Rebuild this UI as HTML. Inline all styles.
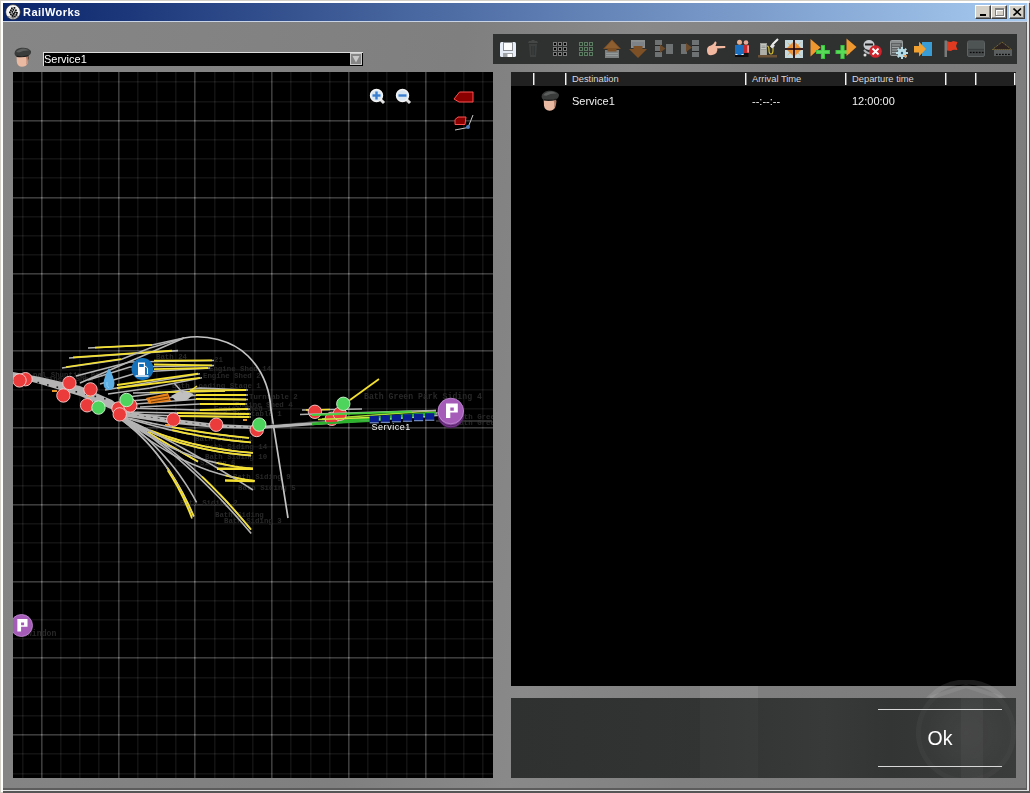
<!DOCTYPE html>
<html><head><meta charset="utf-8"><title>RailWorks</title>
<style>
*{box-sizing:border-box}
html,body{margin:0;padding:0}
body{width:1030px;height:793px;overflow:hidden;position:relative;background:#d4d0c8;font-family:"Liberation Sans",sans-serif}
.abs{position:absolute}
</style></head><body>

<div class="abs" style="left:1px;top:1px;width:1028px;height:791px;background:#fff"></div>
<div class="abs" style="left:3px;top:3px;width:1027px;height:790px;background:#555555"></div>
<div class="abs" style="left:3px;top:3px;width:1026px;height:788px;background:#e2e2e2"></div>
<div class="abs" style="left:3px;top:3px;width:1024px;height:787px;background:#5c5c5c"></div>

<div class="abs" style="left:3px;top:21px;width:1023px;height:767px;background:linear-gradient(100deg,#858685 0%,#7e7f7e 40%,#888988 55%,#7f807f 70%,#7a7b7a 100%)"></div>
<div class="abs" style="left:3px;top:21px;width:1024px;height:1px;background:#c8d4e6"></div>

<div class="abs" style="left:3px;top:3px;width:1024px;height:18px;background:linear-gradient(90deg,#0a246a,#a6caf0)"></div>
<div class="abs" style="left:23px;top:4px;height:16px;line-height:16px;font-size:11px;font-weight:bold;color:#fff;letter-spacing:0.45px">RailWorks</div>

<svg class="abs" style="left:5px;top:4px" width="16" height="16" viewBox="0 0 16 16">
<circle cx="8" cy="8" r="7.4" fill="#f4f4f4" stroke="#222" stroke-width="0.7"/>
<rect x="6" y="3.5" width="1.8" height="1.8" fill="#111"/><rect x="8.5" y="3" width="1.8" height="1.8" fill="#111"/><rect x="5" y="5.5" width="1.8" height="1.8" fill="#111"/><rect x="7.5" y="5" width="1.8" height="1.8" fill="#111"/><rect x="10" y="5.5" width="1.8" height="1.8" fill="#111"/><rect x="4" y="7.5" width="1.8" height="1.8" fill="#111"/><rect x="6.5" y="7" width="1.8" height="1.8" fill="#111"/><rect x="9" y="7.5" width="1.8" height="1.8" fill="#111"/><rect x="11" y="8" width="1.8" height="1.8" fill="#111"/><rect x="5" y="9.5" width="1.8" height="1.8" fill="#111"/><rect x="8" y="9" width="1.8" height="1.8" fill="#111"/><rect x="10.5" y="10" width="1.8" height="1.8" fill="#111"/><rect x="6.5" y="11" width="1.8" height="1.8" fill="#111"/><rect x="9" y="11.5" width="1.8" height="1.8" fill="#111"/>
<path d="M8,9 L8,14.5" stroke="#111" stroke-width="1.2"/>
<path d="M3,12.5 Q8,15 13,12.5" stroke="#777" stroke-width="0.8" fill="none"/>
</svg>

<div class="abs" style="left:975px;top:5px;width:16px;height:14px;background:#d4d0c8;border-top:1px solid #fff;border-left:1px solid #fff;border-right:1px solid #404040;border-bottom:1px solid #404040;box-shadow:inset -1px -1px 0 #808080"><div class="abs" style="left:4px;top:8px;width:6px;height:2px;background:#000"></div></div>
<div class="abs" style="left:991px;top:5px;width:16px;height:14px;background:#d4d0c8;border-top:1px solid #fff;border-left:1px solid #fff;border-right:1px solid #404040;border-bottom:1px solid #404040;box-shadow:inset -1px -1px 0 #808080"><div class="abs" style="left:4px;top:3px;width:9px;height:8px;border:1px solid #fff;border-top-width:2px"></div><div class="abs" style="left:3px;top:2px;width:9px;height:8px;border:1px solid #808080;border-top-width:2px"></div></div>
<div class="abs" style="left:1009px;top:5px;width:16px;height:14px;background:#d4d0c8;border-top:1px solid #fff;border-left:1px solid #fff;border-right:1px solid #404040;border-bottom:1px solid #404040;box-shadow:inset -1px -1px 0 #808080"><svg class="abs" style="left:3px;top:2px" width="9" height="8" viewBox="0 0 9 8"><path d="M0.5 0.5 L8 7.5 M8 0.5 L0.5 7.5" stroke="#000" stroke-width="1.6"/></svg></div>
<svg class="abs" style="left:14px;top:47px" width="18" height="20" viewBox="0 0 18 20">
<path d="M2.5,8 L14,8 Q14.8,13 13.5,16.5 Q12,19.8 8,19.8 Q3.5,19.5 2.8,15 Z" fill="#eab9a2"/>
<path d="M11.5,9 Q13.5,13 12,18 Q13.8,16 14,12 L14,8.5 Z" fill="#b07a66"/>
<path d="M14,8 L15,11 L14.2,14 Z" fill="#5a4030"/>
<path d="M0.5,6.5 Q0.5,2 7,0.8 Q14,0 17,4 Q17.5,7 14.5,8.8 Q9,10.5 2.5,9.5 Q0.5,8.5 0.5,6.5 Z" fill="#3a3b3b"/>
<path d="M2,5 Q5,1.5 10,1.5 Q13,1.8 15,3.5 Q10,3 5,5.5 Z" fill="#5c5e5e"/>
<path d="M2.5,8.5 Q9,10 14.5,8 L14.5,9.2 Q9,11 2.5,10 Z" fill="#1e1e1e"/>
</svg>
<div class="abs" style="left:43px;top:52px;width:320px;height:14px;background:#000;border-top:1px solid #ddd;border-left:1px solid #ddd"></div>
<div class="abs" style="left:44px;top:52px;height:14px;line-height:14px;font-size:11px;color:#fff">Service1</div>
<div class="abs" style="left:350px;top:53px;width:12px;height:12px;background:#858585;border:1px solid #c8c8c8"></div>
<svg class="abs" style="left:352px;top:55px" width="8" height="8" viewBox="0 0 8 8"><path d="M0.5 1 L7.5 1 L4 7.5 Z" fill="#c8c8c8"/></svg>

<svg class="abs" style="left:13px;top:72px" width="480" height="706" viewBox="0 0 480 706"><rect width="480" height="706" fill="#000"/>
<g>
<rect x="9" y="0" width="1" height="706" fill="#121212"/><rect x="10" y="0" width="1" height="706" fill="#0a0a0a"/>
<rect x="28" y="0" width="1" height="706" fill="#3c3c3c"/><rect x="29" y="0" width="1" height="706" fill="#242424"/>
<rect x="47" y="0" width="1" height="706" fill="#121212"/><rect x="48" y="0" width="1" height="706" fill="#0a0a0a"/>
<rect x="66" y="0" width="1" height="706" fill="#121212"/><rect x="67" y="0" width="1" height="706" fill="#0a0a0a"/>
<rect x="85" y="0" width="1" height="706" fill="#121212"/><rect x="86" y="0" width="1" height="706" fill="#0a0a0a"/>
<rect x="105" y="0" width="1" height="706" fill="#3c3c3c"/><rect x="106" y="0" width="1" height="706" fill="#242424"/>
<rect x="124" y="0" width="1" height="706" fill="#121212"/><rect x="125" y="0" width="1" height="706" fill="#0a0a0a"/>
<rect x="143" y="0" width="1" height="706" fill="#121212"/><rect x="144" y="0" width="1" height="706" fill="#0a0a0a"/>
<rect x="162" y="0" width="1" height="706" fill="#121212"/><rect x="163" y="0" width="1" height="706" fill="#0a0a0a"/>
<rect x="181" y="0" width="1" height="706" fill="#3c3c3c"/><rect x="182" y="0" width="1" height="706" fill="#242424"/>
<rect x="201" y="0" width="1" height="706" fill="#121212"/><rect x="202" y="0" width="1" height="706" fill="#0a0a0a"/>
<rect x="220" y="0" width="1" height="706" fill="#121212"/><rect x="221" y="0" width="1" height="706" fill="#0a0a0a"/>
<rect x="239" y="0" width="1" height="706" fill="#121212"/><rect x="240" y="0" width="1" height="706" fill="#0a0a0a"/>
<rect x="258" y="0" width="1" height="706" fill="#3c3c3c"/><rect x="259" y="0" width="1" height="706" fill="#242424"/>
<rect x="277" y="0" width="1" height="706" fill="#121212"/><rect x="278" y="0" width="1" height="706" fill="#0a0a0a"/>
<rect x="297" y="0" width="1" height="706" fill="#121212"/><rect x="298" y="0" width="1" height="706" fill="#0a0a0a"/>
<rect x="316" y="0" width="1" height="706" fill="#121212"/><rect x="317" y="0" width="1" height="706" fill="#0a0a0a"/>
<rect x="335" y="0" width="1" height="706" fill="#3c3c3c"/><rect x="336" y="0" width="1" height="706" fill="#242424"/>
<rect x="354" y="0" width="1" height="706" fill="#121212"/><rect x="355" y="0" width="1" height="706" fill="#0a0a0a"/>
<rect x="373" y="0" width="1" height="706" fill="#121212"/><rect x="374" y="0" width="1" height="706" fill="#0a0a0a"/>
<rect x="393" y="0" width="1" height="706" fill="#121212"/><rect x="394" y="0" width="1" height="706" fill="#0a0a0a"/>
<rect x="412" y="0" width="1" height="706" fill="#3c3c3c"/><rect x="413" y="0" width="1" height="706" fill="#242424"/>
<rect x="431" y="0" width="1" height="706" fill="#121212"/><rect x="432" y="0" width="1" height="706" fill="#0a0a0a"/>
<rect x="450" y="0" width="1" height="706" fill="#121212"/><rect x="451" y="0" width="1" height="706" fill="#0a0a0a"/>
<rect x="469" y="0" width="1" height="706" fill="#121212"/><rect x="470" y="0" width="1" height="706" fill="#0a0a0a"/>
</g><g style="mix-blend-mode:plus-lighter">
<rect x="0" y="9" width="480" height="1" fill="#121212"/><rect x="0" y="10" width="480" height="1" fill="#0a0a0a"/>
<rect x="0" y="29" width="480" height="1" fill="#121212"/><rect x="0" y="30" width="480" height="1" fill="#0a0a0a"/>
<rect x="0" y="48" width="480" height="1" fill="#3c3c3c"/><rect x="0" y="49" width="480" height="1" fill="#242424"/>
<rect x="0" y="67" width="480" height="1" fill="#121212"/><rect x="0" y="68" width="480" height="1" fill="#0a0a0a"/>
<rect x="0" y="86" width="480" height="1" fill="#121212"/><rect x="0" y="87" width="480" height="1" fill="#0a0a0a"/>
<rect x="0" y="105" width="480" height="1" fill="#121212"/><rect x="0" y="106" width="480" height="1" fill="#0a0a0a"/>
<rect x="0" y="125" width="480" height="1" fill="#3c3c3c"/><rect x="0" y="126" width="480" height="1" fill="#242424"/>
<rect x="0" y="144" width="480" height="1" fill="#121212"/><rect x="0" y="145" width="480" height="1" fill="#0a0a0a"/>
<rect x="0" y="163" width="480" height="1" fill="#121212"/><rect x="0" y="164" width="480" height="1" fill="#0a0a0a"/>
<rect x="0" y="182" width="480" height="1" fill="#121212"/><rect x="0" y="183" width="480" height="1" fill="#0a0a0a"/>
<rect x="0" y="201" width="480" height="1" fill="#3c3c3c"/><rect x="0" y="202" width="480" height="1" fill="#242424"/>
<rect x="0" y="221" width="480" height="1" fill="#121212"/><rect x="0" y="222" width="480" height="1" fill="#0a0a0a"/>
<rect x="0" y="240" width="480" height="1" fill="#121212"/><rect x="0" y="241" width="480" height="1" fill="#0a0a0a"/>
<rect x="0" y="259" width="480" height="1" fill="#121212"/><rect x="0" y="260" width="480" height="1" fill="#0a0a0a"/>
<rect x="0" y="278" width="480" height="1" fill="#3c3c3c"/><rect x="0" y="279" width="480" height="1" fill="#242424"/>
<rect x="0" y="297" width="480" height="1" fill="#121212"/><rect x="0" y="298" width="480" height="1" fill="#0a0a0a"/>
<rect x="0" y="317" width="480" height="1" fill="#121212"/><rect x="0" y="318" width="480" height="1" fill="#0a0a0a"/>
<rect x="0" y="336" width="480" height="1" fill="#121212"/><rect x="0" y="337" width="480" height="1" fill="#0a0a0a"/>
<rect x="0" y="355" width="480" height="1" fill="#3c3c3c"/><rect x="0" y="356" width="480" height="1" fill="#242424"/>
<rect x="0" y="374" width="480" height="1" fill="#121212"/><rect x="0" y="375" width="480" height="1" fill="#0a0a0a"/>
<rect x="0" y="393" width="480" height="1" fill="#121212"/><rect x="0" y="394" width="480" height="1" fill="#0a0a0a"/>
<rect x="0" y="413" width="480" height="1" fill="#121212"/><rect x="0" y="414" width="480" height="1" fill="#0a0a0a"/>
<rect x="0" y="432" width="480" height="1" fill="#3c3c3c"/><rect x="0" y="433" width="480" height="1" fill="#242424"/>
<rect x="0" y="451" width="480" height="1" fill="#121212"/><rect x="0" y="452" width="480" height="1" fill="#0a0a0a"/>
<rect x="0" y="470" width="480" height="1" fill="#121212"/><rect x="0" y="471" width="480" height="1" fill="#0a0a0a"/>
<rect x="0" y="489" width="480" height="1" fill="#121212"/><rect x="0" y="490" width="480" height="1" fill="#0a0a0a"/>
<rect x="0" y="509" width="480" height="1" fill="#3c3c3c"/><rect x="0" y="510" width="480" height="1" fill="#242424"/>
<rect x="0" y="528" width="480" height="1" fill="#121212"/><rect x="0" y="529" width="480" height="1" fill="#0a0a0a"/>
<rect x="0" y="547" width="480" height="1" fill="#121212"/><rect x="0" y="548" width="480" height="1" fill="#0a0a0a"/>
<rect x="0" y="566" width="480" height="1" fill="#121212"/><rect x="0" y="567" width="480" height="1" fill="#0a0a0a"/>
<rect x="0" y="585" width="480" height="1" fill="#3c3c3c"/><rect x="0" y="586" width="480" height="1" fill="#242424"/>
<rect x="0" y="605" width="480" height="1" fill="#121212"/><rect x="0" y="606" width="480" height="1" fill="#0a0a0a"/>
<rect x="0" y="624" width="480" height="1" fill="#121212"/><rect x="0" y="625" width="480" height="1" fill="#0a0a0a"/>
<rect x="0" y="643" width="480" height="1" fill="#121212"/><rect x="0" y="644" width="480" height="1" fill="#0a0a0a"/>
<rect x="0" y="662" width="480" height="1" fill="#3c3c3c"/><rect x="0" y="663" width="480" height="1" fill="#242424"/>
<rect x="0" y="681" width="480" height="1" fill="#121212"/><rect x="0" y="682" width="480" height="1" fill="#0a0a0a"/>
<rect x="0" y="701" width="480" height="1" fill="#121212"/><rect x="0" y="702" width="480" height="1" fill="#0a0a0a"/>
</g>
<g id="mapcontent" transform="translate(-13,-72)"><text x="33" y="377" fill="#282828" font-family="Liberation Mono" font-size="7.4" font-weight="bold">nal Shunting Bath</text>
<text x="40" y="381" fill="#282828" font-family="Liberation Mono" font-size="7.4" font-weight="bold">ngineer Shed</text>
<text x="156" y="359" fill="#282828" font-family="Liberation Mono" font-size="7.4" font-weight="bold">Bath 24</text>
<text x="214" y="362" fill="#282828" font-family="Liberation Mono" font-size="7.4" font-weight="bold">21</text>
<text x="209" y="371" fill="#282828" font-family="Liberation Mono" font-size="7.4" font-weight="bold">Engine Shed 14</text>
<text x="203" y="378" fill="#282828" font-family="Liberation Mono" font-size="7.4" font-weight="bold">Engine Shed 2</text>
<text x="172" y="388" fill="#282828" font-family="Liberation Mono" font-size="7.4" font-weight="bold">Bath Loading Stage 1</text>
<text x="249" y="399" fill="#282828" font-family="Liberation Mono" font-size="7.4" font-weight="bold">Turntable 2</text>
<text x="235" y="407" fill="#282828" font-family="Liberation Mono" font-size="7.4" font-weight="bold">Engine Shed 4</text>
<text x="214" y="410.5" fill="#282828" font-family="Liberation Mono" font-size="7.4" font-weight="bold">Engine Shed 1</text>
<text x="233" y="416" fill="#282828" font-family="Liberation Mono" font-size="7.4" font-weight="bold">Turntable 1</text>
<text x="195" y="441" fill="#282828" font-family="Liberation Mono" font-size="7.4" font-weight="bold">Bath Siding 1</text>
<text x="205" y="449" fill="#282828" font-family="Liberation Mono" font-size="7.4" font-weight="bold">Bath Siding 14</text>
<text x="205" y="459" fill="#282828" font-family="Liberation Mono" font-size="7.4" font-weight="bold">Bath Siding 10</text>
<text x="200" y="465" fill="#282828" font-family="Liberation Mono" font-size="7.4" font-weight="bold">Siding 6</text>
<text x="233" y="479" fill="#282828" font-family="Liberation Mono" font-size="7.4" font-weight="bold">Bath Siding 9</text>
<text x="238" y="490" fill="#282828" font-family="Liberation Mono" font-size="7.4" font-weight="bold">Bath Siding 5</text>
<text x="180" y="505" fill="#282828" font-family="Liberation Mono" font-size="7.4" font-weight="bold">Bath Siding 2</text>
<text x="224" y="523" fill="#282828" font-family="Liberation Mono" font-size="7.4" font-weight="bold">Bath Siding 3</text>
<text x="215" y="517" fill="#282828" font-family="Liberation Mono" font-size="7.4" font-weight="bold">Bath Siding</text>
<text x="455" y="419" fill="#282828" font-family="Liberation Mono" font-size="7.4" font-weight="bold">Bath Green</text>
<text x="455" y="425" fill="#282828" font-family="Liberation Mono" font-size="7.4" font-weight="bold">Bath Green</text>
<text x="364" y="399" fill="#282828" font-family="Liberation Mono" font-size="8.2" font-weight="bold">Bath Green Park Siding 4</text>
<text x="22" y="636" fill="#282828" font-family="Liberation Mono" font-size="8.2" font-weight="bold">Swindon</text>
<path d="M80.0,383.0 L184.0,338.0" fill="none" stroke="#b8b8b8" stroke-width="1.6"/>
<path d="M184,338 C205,334 232,340 248,356 C264,372 270,392 271,410 L288,518" fill="none" stroke="#c4c4c4" stroke-width="1.7"/>
<path d="M13,372 L40,377 L80,386 L112,400 L122,408 L118,412 L80,396 L40,384 L13,377 Z" fill="#b4b4b4"/>
<rect x="28.0" y="379.5" width="1.6" height="1.6" fill="#1a1a1a"/>
<rect x="37.5" y="381.8" width="1.6" height="1.6" fill="#1a1a1a"/>
<rect x="47.0" y="384.1" width="1.6" height="1.6" fill="#1a1a1a"/>
<rect x="56.5" y="386.4" width="1.6" height="1.6" fill="#1a1a1a"/>
<rect x="66.0" y="388.7" width="1.6" height="1.6" fill="#1a1a1a"/>
<rect x="75.5" y="391.0" width="1.6" height="1.6" fill="#1a1a1a"/>
<rect x="85.0" y="393.3" width="1.6" height="1.6" fill="#1a1a1a"/>
<rect x="94.5" y="395.6" width="1.6" height="1.6" fill="#1a1a1a"/>
<rect x="104.0" y="397.9" width="1.6" height="1.6" fill="#1a1a1a"/>
<path d="M120,410 L175,419 L217,424 L260,426 L330,420 L440,412 L440,416 L330,424 L260,429 L217,428 L175,424 L120,416 Z" fill="#b4b4b4"/>
<path d="M130,414 L175,421 L217,426 L260,427.5" stroke="#1a1a1a" stroke-width="0.6" stroke-dasharray="2,5" fill="none"/>
<path d="M270,424.5 L440,414" stroke="#111" stroke-width="0.6" fill="none"/>
<path d="M88.0,348.0 L152.0,345.0 L170.0,341.0 L184.0,338.0" fill="none" stroke="#b4b4b4" stroke-width="1.6"/>
<path d="M95.0,347.6 L152.0,344.8" fill="none" stroke="#f4e030" stroke-width="1.7"/>
<path d="M69.0,358.0 L178.0,350.6" fill="none" stroke="#b4b4b4" stroke-width="1.6"/>
<path d="M73.0,357.4 L172.0,350.6" fill="none" stroke="#f4e030" stroke-width="1.7"/>
<path d="M62.0,368.0 L121.0,359.5 L150.0,348.0 L184.0,338.0" fill="none" stroke="#b4b4b4" stroke-width="1.6"/>
<path d="M66.0,367.0 L121.0,359.0" fill="none" stroke="#f4e030" stroke-width="1.7"/>
<path d="M76.0,376.0 L130.0,362.0 L214.0,360.5" fill="none" stroke="#b4b4b4" stroke-width="1.5"/>
<path d="M154.0,360.6 L212.0,360.4" fill="none" stroke="#f4e030" stroke-width="1.8"/>
<path d="M88.0,380.0 L130.0,367.0 L214.0,365.5" fill="none" stroke="#b4b4b4" stroke-width="1.5"/>
<path d="M154.0,364.5 L212.0,365.3" fill="none" stroke="#f4e030" stroke-width="1.8"/>
<path d="M100.0,384.0 L140.0,372.0 L210.0,368.0" fill="none" stroke="#b4b4b4" stroke-width="1.5"/>
<path d="M154.0,369.2 L208.0,368.0" fill="none" stroke="#f4e030" stroke-width="1.8"/>
<path d="M105.0,390.0 L140.0,384.0 L200.0,373.7" fill="none" stroke="#b4b4b4" stroke-width="1.5"/>
<path d="M117.0,385.0 L198.0,373.7" fill="none" stroke="#f4e030" stroke-width="1.8"/>
<path d="M108.0,394.0 L150.0,388.0 L202.0,377.8" fill="none" stroke="#b4b4b4" stroke-width="1.5"/>
<path d="M117.0,388.0 L200.0,377.8" fill="none" stroke="#f4e030" stroke-width="1.8"/>
<path d="M120.0,398.0 L200.0,388.0 L248.0,390.0" fill="none" stroke="#b4b4b4" stroke-width="1.5"/>
<path d="M190.0,390.5 L246.0,390.0" fill="none" stroke="#f4e030" stroke-width="1.8"/>
<path d="M130.0,401.0 L200.0,395.0 L248.0,395.0" fill="none" stroke="#b4b4b4" stroke-width="1.5"/>
<path d="M196.0,395.0 L246.0,395.0" fill="none" stroke="#f4e030" stroke-width="1.8"/>
<path d="M135.0,404.0 L200.0,399.0 L248.0,399.5" fill="none" stroke="#b4b4b4" stroke-width="1.5"/>
<path d="M196.0,399.0 L246.0,399.5" fill="none" stroke="#f4e030" stroke-width="1.8"/>
<path d="M140.0,407.0 L200.0,404.0 L247.0,404.0" fill="none" stroke="#b4b4b4" stroke-width="1.5"/>
<path d="M200.0,404.0 L245.0,404.0" fill="none" stroke="#f4e030" stroke-width="1.8"/>
<path d="M125.0,408.0 L200.0,410.0 L250.0,409.0" fill="none" stroke="#b4b4b4" stroke-width="1.5"/>
<path d="M200.0,410.0 L248.0,409.0" fill="none" stroke="#f4e030" stroke-width="1.8"/>
<path d="M125.0,412.0 L177.0,413.0 L251.0,414.0" fill="none" stroke="#b4b4b4" stroke-width="1.5"/>
<path d="M177.0,413.0 L249.0,414.0" fill="none" stroke="#f4e030" stroke-width="1.8"/>
<path d="M125.0,414.0 L177.0,416.0 L251.0,417.0" fill="none" stroke="#b4b4b4" stroke-width="1.5"/>
<path d="M177.0,416.0 L249.0,417.0" fill="none" stroke="#f4e030" stroke-width="1.8"/>
<path d="M133.0,393.0 L225.0,391.0" fill="none" stroke="#b4b4b4" stroke-width="1.4"/>
<path d="M150.0,392.5 L225.0,391.0" fill="none" stroke="#f4e030" stroke-width="1.4"/>
<path d="M120.0,416.0 L128.1,418.0 L136.2,419.8 L144.3,421.6 L152.4,423.4 L160.5,425.0 L168.6,426.6 L176.7,428.1 L184.8,429.5 L192.8,430.8 L200.9,432.1 L208.9,433.3 L216.9,434.4 L225.0,435.4 L233.0,436.3 L241.0,437.2 L249.0,438.0" fill="none" stroke="#b4b4b4" stroke-width="1.6"/>
<path d="M171.8,427.0 L176.7,427.9 L181.5,428.7 L186.4,429.6 L191.2,430.4 L196.0,431.1 L200.9,431.9 L205.7,432.6 L210.5,433.3 L215.3,434.0 L220.1,434.6 L225.0,435.2 L229.8,435.8 L234.6,436.3 L239.4,436.8 L244.2,437.3 L249.0,437.8" fill="none" stroke="#f4e030" stroke-width="1.7"/>
<path d="M120.0,416.0 L128.1,418.6 L136.3,421.0 L144.4,423.3 L152.6,425.5 L160.7,427.6 L168.9,429.6 L177.1,431.4 L185.2,433.1 L193.4,434.7 L201.6,436.2 L209.8,437.5 L218.1,438.8 L226.3,439.9 L234.5,440.9 L242.8,441.8 L251.0,442.5" fill="none" stroke="#b4b4b4" stroke-width="1.6"/>
<path d="M172.2,430.1 L177.1,431.2 L182.0,432.3 L186.9,433.3 L191.8,434.2 L196.7,435.1 L201.6,436.0 L206.6,436.8 L211.5,437.6 L216.4,438.3 L221.4,439.0 L226.3,439.7 L231.2,440.3 L236.2,440.9 L241.1,441.4 L246.1,441.9 L251.0,442.3" fill="none" stroke="#f4e030" stroke-width="1.7"/>
<path d="M120.0,416.0 L127.0,419.8 L134.1,423.4 L141.4,426.7 L148.9,429.9 L156.6,432.9 L164.5,435.7 L172.5,438.3 L180.8,440.8 L189.2,443.0 L197.7,445.0 L206.5,446.8 L215.4,448.4 L224.6,449.9 L233.9,451.1 L243.3,452.2 L253.0,453.0" fill="none" stroke="#b4b4b4" stroke-width="1.6"/>
<path d="M150.2,430.2 L155.8,432.4 L161.6,434.5 L167.5,436.5 L173.5,438.4 L179.6,440.2 L185.8,441.9 L192.1,443.5 L198.4,444.9 L204.9,446.3 L211.5,447.5 L218.2,448.7 L224.9,449.7 L231.8,450.7 L238.8,451.5 L245.8,452.2 L253.0,452.8" fill="none" stroke="#f4e030" stroke-width="1.7"/>
<path d="M120.0,416.0 L127.0,420.1 L134.1,424.1 L141.4,427.8 L148.8,431.2 L156.4,434.5 L164.2,437.5 L172.1,440.3 L180.2,442.9 L188.5,445.3 L197.0,447.4 L205.6,449.3 L214.3,451.0 L223.2,452.5 L232.3,453.8 L241.6,454.8 L251.0,455.6" fill="none" stroke="#b4b4b4" stroke-width="1.6"/>
<path d="M150.0,431.6 L155.7,434.0 L161.4,436.2 L167.2,438.4 L173.1,440.4 L179.1,442.4 L185.2,444.1 L191.4,445.8 L197.6,447.4 L204.0,448.8 L210.4,450.1 L217.0,451.3 L223.6,452.4 L230.3,453.3 L237.1,454.1 L244.0,454.8 L251.0,455.4" fill="none" stroke="#f4e030" stroke-width="1.7"/>
<path d="M120.0,416.0 L125.0,419.0 L130.0,422.0 L134.9,424.9 L139.9,427.9 L144.8,430.8 L149.7,433.7 L154.6,436.6 L159.5,439.4 L164.4,442.3 L169.2,445.1 L174.1,448.0 L178.9,450.8 L183.7,453.5 L188.5,456.3 L193.2,459.1 L198.0,461.8" fill="none" stroke="#b4b4b4" stroke-width="1.6"/>
<path d="M147.8,432.3 L150.9,434.2 L154.1,436.1 L157.3,438.0 L160.5,439.8 L163.6,441.7 L166.8,443.5 L169.9,445.4 L173.1,447.2 L176.2,449.0 L179.4,450.8 L182.5,452.7 L185.6,454.5 L188.7,456.3 L191.8,458.0 L194.9,459.8 L198.0,461.6" fill="none" stroke="#f4e030" stroke-width="1.7"/>
<path d="M120.0,416.0 L127.3,421.6 L134.8,426.9 L142.3,431.9 L150.1,436.6 L157.9,440.9 L165.9,445.0 L174.0,448.7 L182.2,452.2 L190.6,455.3 L199.1,458.2 L207.8,460.7 L216.6,462.9 L225.5,464.9 L234.5,466.5 L243.7,467.8 L253.0,468.8" fill="none" stroke="#b4b4b4" stroke-width="1.6"/>
<path d="M216.6,462.8 L218.8,463.3 L221.0,463.7 L223.2,464.2 L225.5,464.7 L227.7,465.1 L230.0,465.5 L232.2,465.9 L234.5,466.3 L236.8,466.6 L239.1,467.0 L241.4,467.3 L243.7,467.6 L246.0,467.9 L248.3,468.1 L250.7,468.4 L253.0,468.6" fill="none" stroke="#f4e030" stroke-width="1.7"/>
<path d="M120.0,416.0 L127.6,422.8 L135.2,429.3 L143.0,435.3 L150.9,441.1 L158.9,446.4 L167.1,451.4 L175.3,456.0 L183.7,460.2 L192.2,464.1 L200.7,467.6 L209.4,470.8 L218.3,473.6 L227.2,476.0 L236.3,478.0 L245.4,479.7 L254.7,481.0" fill="none" stroke="#b4b4b4" stroke-width="1.6"/>
<path d="M225.4,475.3 L227.2,475.8 L229.0,476.2 L230.8,476.6 L232.6,477.0 L234.4,477.4 L236.3,477.8 L238.1,478.2 L239.9,478.5 L241.7,478.9 L243.6,479.2 L245.4,479.5 L247.3,479.8 L249.1,480.1 L251.0,480.3 L252.8,480.6 L254.7,480.8" fill="none" stroke="#f4e030" stroke-width="1.7"/>
<path d="M120.0,416.0 L126.4,420.9 L132.6,425.9 L138.5,430.9 L144.3,436.0 L149.8,441.2 L155.1,446.4 L160.2,451.7 L165.1,457.1 L169.8,462.5 L174.3,468.0 L178.5,473.5 L182.5,479.2 L186.3,484.9 L189.9,490.6 L193.3,496.4 L196.5,502.3" fill="none" stroke="#b4b4b4" stroke-width="1.6"/>
<path d="M118.0,417.0 L123.8,421.3 L129.5,425.8 L135.0,430.6 L140.4,435.6 L145.6,440.9 L150.7,446.5 L155.6,452.3 L160.4,458.4 L165.1,464.7 L169.6,471.3 L174.0,478.2 L178.3,485.3 L182.4,492.7 L186.3,500.4 L190.1,508.3 L193.8,516.5" fill="none" stroke="#b4b4b4" stroke-width="1.6"/>
<path d="M167.1,467.4 L169.0,470.1 L170.8,472.9 L172.6,475.7 L174.4,478.6 L176.1,481.5 L177.8,484.4 L179.5,487.4 L181.2,490.4 L182.9,493.5 L184.5,496.6 L186.1,499.8 L187.7,503.0 L189.3,506.3 L190.8,509.6 L192.3,512.9 L193.8,516.3" fill="none" stroke="#f4e030" stroke-width="1.7"/>
<path d="M119.0,418.0 L124.9,422.4 L130.6,427.0 L136.2,431.8 L141.6,436.9 L146.8,442.3 L151.8,447.9 L156.6,453.7 L161.2,459.8 L165.7,466.1 L170.0,472.6 L174.1,479.4 L178.1,486.4 L181.8,493.7 L185.4,501.2 L188.8,509.0 L192.0,517.0" fill="none" stroke="#b4b4b4" stroke-width="1.4"/>
<path d="M167.6,470.4 L169.4,473.1 L171.1,475.9 L172.8,478.6 L174.5,481.5 L176.1,484.3 L177.7,487.2 L179.2,490.2 L180.8,493.2 L182.3,496.2 L183.8,499.2 L185.2,502.4 L186.6,505.5 L188.0,508.7 L189.4,511.9 L190.7,515.2 L192.0,518.5" fill="none" stroke="#f4e030" stroke-width="1.7"/>
<path d="M120.0,416.0 L128.7,421.0 L137.4,426.3 L145.9,431.9 L154.4,437.7 L162.9,443.9 L171.2,450.3 L179.5,457.0 L187.8,463.9 L195.9,471.2 L204.0,478.7 L212.0,486.5 L219.9,494.6 L227.8,502.9 L235.6,511.6 L243.3,520.5 L251.0,529.7" fill="none" stroke="#b4b4b4" stroke-width="1.6"/>
<path d="M202.1,476.7 L205.2,479.6 L208.3,482.7 L211.4,485.7 L214.5,488.9 L217.6,492.0 L220.7,495.2 L223.8,498.4 L226.9,501.7 L229.9,505.0 L233.0,508.4 L236.0,511.8 L239.0,515.3 L242.0,518.8 L245.0,522.3 L248.0,525.9 L251.0,529.5" fill="none" stroke="#f4e030" stroke-width="1.7"/>
<path d="M120.0,416.0 L128.5,421.4 L136.9,427.0 L145.3,432.9 L153.7,439.1 L162.0,445.5 L170.3,452.2 L178.6,459.2 L186.8,466.4 L195.0,473.8 L203.1,481.6 L211.2,489.6 L219.3,497.8 L227.3,506.4 L235.3,515.1 L243.3,524.2 L251.2,533.5" fill="none" stroke="#b4b4b4" stroke-width="1.6"/>
<path d="M120.0,416.0 L127.8,419.7 L135.6,423.5 L143.6,427.4 L151.6,431.5 L159.6,435.7 L167.8,440.0 L176.0,444.4 L184.2,449.0 L192.6,453.7 L201.0,458.5 L209.5,463.4 L218.1,468.5 L226.7,473.7 L235.4,479.0 L244.2,484.4 L253.0,490.0" fill="none" stroke="#b4b4b4" stroke-width="1.6"/>
<path d="M217.0,468.8 L253.0,468.8" fill="none" stroke="#f4e030" stroke-width="2.4"/>
<path d="M225.0,480.5 L254.5,481.0" fill="none" stroke="#f4e030" stroke-width="2.4"/>
<path d="M146,398 L168,393 L171,401 L149,404 Z" fill="#e8821c"/>
<path d="M150,399.2 L168,396 M151,402 L169,399" stroke="#3a1a00" stroke-width="0.7"/>
<rect x="52" y="390" width="5" height="2" fill="#e89a30"/><rect x="88" y="395" width="4" height="2" fill="#e89a30"/><rect x="165" y="424" width="5" height="2" fill="#e89a30"/><rect x="243" y="419" width="4" height="2" fill="#e89a30"/>
<path d="M171,396 L182,390 L194,394 L187,400 L176,401 Z" fill="#c0c0c0"/>
<path d="M174.0,383.0 L183.0,393.0" fill="none" stroke="#b4b4b4" stroke-width="1.5"/>
<path d="M197.0,386.0 L189.0,392.0" fill="none" stroke="#f4e030" stroke-width="1.5"/>
<path d="M312.0,424.0 L436.0,412.5" fill="none" stroke="#28b828" stroke-width="2.6"/>
<path d="M322.0,419.0 L436.0,410.5" fill="none" stroke="#a8e030" stroke-width="1.4"/>
<path d="M350.0,400.0 L379.0,379.0" fill="none" stroke="#f4e030" stroke-width="1.8"/>
<path d="M342.0,404.0 L350.0,400.0" fill="none" stroke="#b4b4b4" stroke-width="1.8"/>
<path d="M302.0,410.0 L362.0,409.0" fill="none" stroke="#b4b4b4" stroke-width="1.5"/>
<path d="M306.0,410.0 L330.0,409.5" fill="none" stroke="#f4e030" stroke-width="1.5"/>
<path d="M436.0,421.0 L492.0,421.0" fill="none" stroke="#3a3a3a" stroke-width="1.5"/>
<circle cx="25.5" cy="379.2" r="6.7" fill="#ec3b3b" stroke="#f8d0d0" stroke-width="0.9"/>
<circle cx="19.5" cy="380.4" r="6.7" fill="#ec3b3b" stroke="#f8d0d0" stroke-width="0.9"/>
<circle cx="69.4" cy="383" r="6.7" fill="#ec3b3b" stroke="#f8d0d0" stroke-width="0.9"/>
<circle cx="63.4" cy="395.5" r="6.7" fill="#ec3b3b" stroke="#f8d0d0" stroke-width="0.9"/>
<circle cx="90.5" cy="389.4" r="6.7" fill="#ec3b3b" stroke="#f8d0d0" stroke-width="0.9"/>
<circle cx="87.1" cy="405.3" r="6.7" fill="#ec3b3b" stroke="#f8d0d0" stroke-width="0.9"/>
<circle cx="98.5" cy="407.6" r="6.7" fill="#4cd45c" stroke="#d0f4d0" stroke-width="0.9"/>
<circle cx="118.5" cy="408.5" r="6.7" fill="#ec3b3b" stroke="#f8d0d0" stroke-width="0.9"/>
<circle cx="130.3" cy="405.5" r="6.7" fill="#ec3b3b" stroke="#f8d0d0" stroke-width="0.9"/>
<circle cx="126.5" cy="400" r="6.7" fill="#4cd45c" stroke="#d0f4d0" stroke-width="0.9"/>
<circle cx="119.7" cy="414.4" r="6.7" fill="#ec3b3b" stroke="#f8d0d0" stroke-width="0.9"/>
<circle cx="173.4" cy="419.6" r="6.7" fill="#ec3b3b" stroke="#f8d0d0" stroke-width="0.9"/>
<circle cx="216.2" cy="424.7" r="6.7" fill="#ec3b3b" stroke="#f8d0d0" stroke-width="0.9"/>
<circle cx="256.7" cy="430" r="6.7" fill="#ec3b3b" stroke="#f8d0d0" stroke-width="0.9"/>
<circle cx="259.3" cy="424.6" r="6.7" fill="#4cd45c" stroke="#d0f4d0" stroke-width="0.9"/>
<circle cx="314.9" cy="411.8" r="6.7" fill="#ec3b3b" stroke="#f8d0d0" stroke-width="0.9"/>
<circle cx="331.8" cy="418.8" r="6.7" fill="#ec3b3b" stroke="#f8d0d0" stroke-width="0.9"/>
<circle cx="339.8" cy="413.8" r="6.7" fill="#ec3b3b" stroke="#f8d0d0" stroke-width="0.9"/>
<circle cx="343.3" cy="403.8" r="6.7" fill="#4cd45c" stroke="#d0f4d0" stroke-width="0.9"/>
<path d="M109,368 Q104,377 103.5,383 Q103.5,390 109,390 Q114.5,390 114.5,383 Q114,377 109,368 Z" fill="#5eb0e4"/><path d="M107,382 Q106,386 109,388" stroke="#8ccaf0" stroke-width="1" fill="none"/>
<circle cx="142.5" cy="369" r="11" fill="#1470b8"/>
<path d="M138,362.5 L145,362.5 L145,375 L138,375 Z" fill="#fff"/><rect x="139.2" y="364" width="4.6" height="3" fill="#1470b8"/><path d="M135.5,376 L148.5,376" stroke="#fff" stroke-width="1.4"/><path d="M145,366 L147.5,368 L147.5,374" stroke="#fff" stroke-width="1" fill="none"/>
<path d="M300.0,414.5 L412.0,411.0 L436.0,410.5" fill="none" stroke="#b0b0b0" stroke-width="1.6"/>
<path d="M312.0,415.0 L412.0,411.5" fill="none" stroke="#48d040" stroke-width="2.2"/>
<path d="M312.0,424.0 L370.0,421.0 L436.0,414.0" fill="none" stroke="#30b030" stroke-width="2.2"/>
<path d="M318.0,419.5 L370.0,417.5" fill="none" stroke="#c8e840" stroke-width="1.6"/>
<rect x="369.6" y="415.8" width="9.2" height="6.5" fill="#0a1e94"/>
<rect x="369.6" y="422.3" width="9.2" height="1" fill="#8aa8e8"/>
<rect x="379.2" y="418.3" width="1.2" height="1.5" fill="#a0e0a0"/>
<rect x="380.7" y="415.3" width="9.2" height="6.5" fill="#0a1e94"/>
<rect x="380.7" y="421.8" width="9.2" height="1" fill="#8aa8e8"/>
<rect x="390.3" y="417.8" width="1.2" height="1.5" fill="#a0e0a0"/>
<rect x="391.8" y="414.8" width="9.2" height="6.5" fill="#0a1e94"/>
<rect x="391.8" y="421.3" width="9.2" height="1" fill="#8aa8e8"/>
<rect x="401.4" y="417.3" width="1.2" height="1.5" fill="#a0e0a0"/>
<rect x="402.9" y="414.2" width="9.2" height="6.5" fill="#0a1e94"/>
<rect x="402.9" y="420.7" width="9.2" height="1" fill="#8aa8e8"/>
<rect x="412.5" y="416.7" width="1.2" height="1.5" fill="#a0e0a0"/>
<rect x="414.0" y="413.7" width="9.2" height="6.5" fill="#0a1e94"/>
<rect x="414.0" y="420.2" width="9.2" height="1" fill="#8aa8e8"/>
<rect x="423.6" y="416.2" width="1.2" height="1.5" fill="#a0e0a0"/>
<rect x="425.1" y="413.2" width="9.2" height="6.5" fill="#0a1e94"/>
<rect x="425.1" y="419.7" width="9.2" height="1" fill="#8aa8e8"/>
<text x="371.5" y="429.6" fill="#f4f4f4" font-family="Liberation Sans" font-size="9" letter-spacing="0.55">Service1</text>
<circle cx="450.8" cy="415" r="12.8" fill="#7a3a90" stroke="#4a1a5a" stroke-width="0.8"/>
<circle cx="450.8" cy="413" r="12.8" fill="#8a4aa0" stroke="#4a1a5a" stroke-width="0.8"/>
<circle cx="450.8" cy="411" r="12.8" fill="#a45cb8" stroke="#c890d8" stroke-width="0.8"/>
<path d="M446.0,418.0 L446.0,403.5 L457.8,403.5 L457.8,412.5 L450.3,412.5 L450.3,418.0 Z M450.3,407.5 L453.8,407.5 L453.8,410.8 L450.3,410.8 Z" fill="#fff" fill-rule="evenodd"/>
<circle cx="21.5" cy="625.5" r="11" fill="#a45cb8" stroke="#c890d8" stroke-width="0.8"/>
<path d="M17.375,631.515625 L17.375,619.0546875 L27.515625,619.0546875 L27.515625,626.7890625 L21.0703125,626.7890625 L21.0703125,631.515625 Z M21.0703125,622.4921875 L24.078125,622.4921875 L24.078125,625.328125 L21.0703125,625.328125 Z" fill="#fff" fill-rule="evenodd"/>
<path d="M379.5,98.5 L384.0,103.0" stroke="#e0e0e0" stroke-width="3"/>
<circle cx="376.5" cy="95.5" r="6" fill="#d8e6f2" stroke="#f4f4f4" stroke-width="1.4"/>
<rect x="372.5" y="94.3" width="8" height="2.4" fill="#3a7ed0"/>
<rect x="375.3" y="91.5" width="2.4" height="8" fill="#3a7ed0"/>
<path d="M405.5,98.5 L410.0,103.0" stroke="#e0e0e0" stroke-width="3"/>
<circle cx="402.5" cy="95.5" r="6" fill="#d8e6f2" stroke="#f4f4f4" stroke-width="1.4"/>
<rect x="398.5" y="94.3" width="8" height="2.4" fill="#3a7ed0"/>
<path d="M454,99 L459.5,92 L473,92 L473,102 L459,102 Z" fill="#8a0000" stroke="#ff5050" stroke-width="1"/>
<path d="M455,119.5 L458,117 L466,117 L465,124.5 L455,124.5 Z" fill="#8a0000" stroke="#ff5050" stroke-width="1"/>
<path d="M455,130 L468,127.5 L473,115" stroke="#c8c8c8" stroke-width="1" fill="none"/><circle cx="468" cy="127" r="2" fill="#5080c0"/></g>
</svg>
<div class="abs" style="left:493px;top:34px;width:524px;height:30px;background:#2f3030"></div>
<svg class="abs" style="left:493px;top:34px" width="524" height="30" viewBox="493 34 524 30">
<rect x="500" y="42" width="16" height="15" rx="1.5" fill="#e6edf6"/>
<rect x="503.5" y="42.5" width="9" height="8" fill="#fbfbfb" stroke="#8a8e92" stroke-width="1"/>
<rect x="503" y="53" width="10" height="4" fill="#a0a4a6"/><rect x="507.5" y="54" width="4.5" height="3" fill="#fff"/>
<path d="M529,44 L537,44 L536,57 L530,57 Z" fill="#3e4040"/><path d="M528,43 L538,43 L537,41 L529,41 Z" fill="#454747"/><rect x="531.5" y="40" width="3" height="2" fill="#454747"/>
<path d="M531.5,46 L531.5,55 M533,46 L533,55 M534.5,46 L534.5,55" stroke="#2e3030" stroke-width="0.7"/>
<rect x="553.5" y="42.5" width="3" height="3" fill="#050505" stroke="#7a7a7a" stroke-width="1"/>
<rect x="553.5" y="47.5" width="3" height="3" fill="#050505" stroke="#7a7a7a" stroke-width="1"/>
<rect x="553.5" y="52.5" width="3" height="3" fill="#050505" stroke="#7a7a7a" stroke-width="1"/>
<rect x="558.5" y="42.5" width="3" height="3" fill="#050505" stroke="#7a7a7a" stroke-width="1"/>
<rect x="558.5" y="47.5" width="3" height="3" fill="#050505" stroke="#7a7a7a" stroke-width="1"/>
<rect x="558.5" y="52.5" width="3" height="3" fill="#050505" stroke="#7a7a7a" stroke-width="1"/>
<rect x="563.5" y="42.5" width="3" height="3" fill="#050505" stroke="#7a7a7a" stroke-width="1"/>
<rect x="563.5" y="47.5" width="3" height="3" fill="#050505" stroke="#7a7a7a" stroke-width="1"/>
<rect x="563.5" y="52.5" width="3" height="3" fill="#050505" stroke="#7a7a7a" stroke-width="1"/>
<rect x="579.5" y="42.5" width="3" height="3" fill="#1e3a24" stroke="#5e7a62" stroke-width="1"/>
<rect x="579.5" y="47.5" width="3" height="3" fill="#1e3a24" stroke="#5e7a62" stroke-width="1"/>
<rect x="579.5" y="52.5" width="3" height="3" fill="#1e3a24" stroke="#5e7a62" stroke-width="1"/>
<rect x="584.5" y="42.5" width="3" height="3" fill="#1e3a24" stroke="#5e7a62" stroke-width="1"/>
<rect x="584.5" y="47.5" width="3" height="3" fill="#1e3a24" stroke="#5e7a62" stroke-width="1"/>
<rect x="584.5" y="52.5" width="3" height="3" fill="#1e3a24" stroke="#5e7a62" stroke-width="1"/>
<rect x="589.5" y="42.5" width="3" height="3" fill="#1e3a24" stroke="#5e7a62" stroke-width="1"/>
<rect x="589.5" y="47.5" width="3" height="3" fill="#1e3a24" stroke="#5e7a62" stroke-width="1"/>
<rect x="589.5" y="52.5" width="3" height="3" fill="#1e3a24" stroke="#5e7a62" stroke-width="1"/>
<rect x="605" y="50" width="14" height="8" fill="#7c8080"/><path d="M606,53.5 L618,53.5 M606,55.5 L618,55.5" stroke="#9aa0a0" stroke-width="0.8"/>
<path d="M612,39.5 L621,49 L616.5,49 L616.5,51.5 L607.5,51.5 L607.5,49 L603,49 Z" fill="#7d5025"/><path d="M612,40.5 L619,48 L605,48 Z" fill="#8c5e30"/>
<rect x="631" y="40" width="14" height="8" fill="#8a8e8e"/><path d="M632,43 L644,43 M632,45 L644,45" stroke="#6a7480" stroke-width="0.8"/>
<path d="M638,58 L647,49 L642.5,49 L642.5,46 L633.5,46 L633.5,49 L629,49 Z" fill="#7d5025"/>
<rect x="655" y="40" width="7" height="17" fill="#6e7272"/><path d="M655,45.5 L662,45.5 M655,51.5 L662,51.5" stroke="#252525" stroke-width="1"/>
<rect x="666" y="44" width="7" height="10" fill="#6e7272"/>
<path d="M660,44.5 L665.5,48.5 L660,52.7 Z" fill="#6a4a2a"/>
<rect x="681" y="44" width="6" height="10" fill="#6e7272"/>
<rect x="692" y="40" width="7" height="17" fill="#6e7272"/><path d="M692,45.5 L699,45.5 M692,51.5 L699,51.5" stroke="#252525" stroke-width="1"/>
<path d="M686,43 L692,47.5 L686,52 Z" fill="#6a4a2a"/>
<path d="M707,50 Q707,46 711,45.5 Q714,44 715,41.5 Q716.5,41 716.5,43 L715.5,46 L725,46 Q726,47 725,48 L717,48.5 Q718,50 717,51 Q717,53 715,54 Q713,55.5 709,55 Q707,54 707,50 Z" fill="#f2b9a0"/>
<circle cx="746" cy="42.5" r="2.3" fill="#e8a898"/><rect x="743" y="45" width="6" height="8" fill="#c8282a"/><rect x="747.5" y="45.5" width="1.2" height="7" fill="#f0d0d0"/><rect x="743.5" y="53" width="5" height="4" fill="#111"/>
<circle cx="739.5" cy="42.3" r="2.5" fill="#e8b090"/><rect x="735" y="45" width="9" height="10.5" fill="#1b6fbf"/><rect x="735" y="55" width="9" height="2" fill="#0c0c10"/><rect x="735.5" y="54" width="2" height="1" fill="#e8f0ff"/><rect x="741.5" y="54" width="2" height="1" fill="#e8f0ff"/>
<rect x="758" y="55" width="19" height="2.5" fill="#6b5236"/>
<rect x="760" y="43" width="7" height="12" fill="#9a9c98"/><rect x="761" y="44" width="5" height="5" fill="#c4c6c0"/><path d="M761.5,46 L765.5,46 M761.5,47.5 L765.5,47.5" stroke="#777" stroke-width="0.6"/><rect x="760.5" y="50" width="6" height="5" fill="#b0b0a8"/>
<path d="M767,46 Q769,46 769,50 Q769,54 771,54 Q773,54 773,50 L773,46" stroke="#d8c030" stroke-width="1.2" fill="none"/>
<path d="M771,47 L773,44 L778,39" stroke="#f0f0f0" stroke-width="2" fill="none"/><rect x="770.5" y="44.5" width="4" height="3" fill="#e0e0e0" transform="rotate(-45 772.5 46)"/>
<rect x="785" y="40" width="18" height="18" fill="#3a0a0a"/>
<rect x="785" y="40" width="8.5" height="8.5" fill="#c4dade"/>
<rect x="794.5" y="40" width="8.5" height="8.5" fill="#c4dade"/>
<rect x="785" y="49.5" width="8.5" height="8.5" fill="#c4dade"/>
<rect x="794.5" y="49.5" width="8.5" height="8.5" fill="#c4dade"/>
<path d="M786.5,41.5 L790,45 L792.8,42.2 L792.8,48.2 L786.8,48.2 L789.6,45.4 Z" fill="#ec9030"/>
<path d="M801.5,41.5 L798,45 L795.2,42.2 L795.2,48.2 L801.2,48.2 L798.4,45.4 Z" fill="#ec9030"/>
<path d="M786.5,56.5 L790,53 L792.8,55.8 L792.8,49.8 L786.8,49.8 L789.6,52.6 Z" fill="#ec9030"/>
<path d="M801.5,56.5 L798,53 L795.2,55.8 L795.2,49.8 L801.2,49.8 L798.4,52.6 Z" fill="#ec9030"/>
<path d="M794,40 L794,58 M785,49 L803,49" stroke="#2a0606" stroke-width="1.6"/>
<path d="M810.5,39 L820.5,47.5 L810.5,56.5 Z" fill="#f09830"/>
<path d="M823,45 L823,59 M816,52 L830,52" stroke="#3cc040" stroke-width="4.2"/>
<path d="M823,46 L823,58 M817,52 L829,52" stroke="#58dc58" stroke-width="2.4"/>
<path d="M842.5,45 L842.5,59 M835.5,52 L849.5,52" stroke="#3cc040" stroke-width="4.2"/>
<path d="M842.5,46 L842.5,58 M836.5,52 L848.5,52" stroke="#58dc58" stroke-width="2.4"/>
<path d="M846.5,38.5 L856.5,47 L846.5,56 Z" fill="#f09830"/>
<ellipse cx="869" cy="45" rx="5.5" ry="5" fill="#c8ccd0"/><rect x="865" y="43.5" width="8" height="2" fill="#222"/><path d="M864,50 Q869,56 873,51" stroke="#b0b4b8" stroke-width="2" fill="none"/><circle cx="865" cy="55" r="1.5" fill="#e0e0e0"/>
<circle cx="875.5" cy="51.5" r="6.3" fill="#d0242c"/><path d="M872.5,48.5 L878.5,54.5 M878.5,48.5 L872.5,54.5" stroke="#fff" stroke-width="1.8"/>
<rect x="890.5" y="40.5" width="12" height="15" rx="1" fill="#5e6262" stroke="#9a9e9e" stroke-width="1"/><rect x="891" y="41" width="11" height="2" fill="#8a8e8e"/>
<path d="M892,45 L900,45 M892,47.5 L899,47.5 M892,50 L897,50 M892,52.5 L896,52.5" stroke="#a8acac" stroke-width="0.9"/>
<circle cx="902" cy="53" r="4.3" fill="#b8dce6"/>
<rect x="901" y="47" width="2" height="3" fill="#b8dce6" transform="rotate(0 902 53)"/>
<rect x="901" y="47" width="2" height="3" fill="#b8dce6" transform="rotate(45 902 53)"/>
<rect x="901" y="47" width="2" height="3" fill="#b8dce6" transform="rotate(90 902 53)"/>
<rect x="901" y="47" width="2" height="3" fill="#b8dce6" transform="rotate(135 902 53)"/>
<rect x="901" y="47" width="2" height="3" fill="#b8dce6" transform="rotate(180 902 53)"/>
<rect x="901" y="47" width="2" height="3" fill="#b8dce6" transform="rotate(225 902 53)"/>
<rect x="901" y="47" width="2" height="3" fill="#b8dce6" transform="rotate(270 902 53)"/>
<rect x="901" y="47" width="2" height="3" fill="#b8dce6" transform="rotate(315 902 53)"/>
<circle cx="902" cy="53" r="1.2" fill="#2a5a70"/><path d="M903,55 L906,58 L907,55 Z" fill="#e89a50"/>
<rect x="922" y="42" width="10" height="14" fill="#3a9cd4"/>
<path d="M914,46 L919,46 L919,41.8 L926,49 L919,56.6 L919,52.5 L914,52.5 Z" fill="#f0a030"/>
<rect x="944.5" y="40.5" width="2.5" height="16.5" fill="#7a7a7a"/><path d="M947,41 Q951,43 953,41 L957.5,42 L956,46 L957.5,50 Q953,49 951,51 L947,50.5 Z" fill="#e03a20"/>
<rect x="967.5" y="41" width="17" height="15.5" rx="1.5" fill="#464a4a" stroke="#5e6262" stroke-width="1"/><rect x="968" y="41.5" width="16" height="7" fill="#4e5454"/><path d="M968,49.5 L984,49.5" stroke="#3a3e3e" stroke-width="1"/>
<rect x="969.8" y="51.8" width="1.8" height="1.3" fill="#0a0a0a"/>
<rect x="972.8" y="51.8" width="1.8" height="1.3" fill="#0a0a0a"/>
<rect x="975.8" y="51.8" width="1.8" height="1.3" fill="#0a0a0a"/>
<rect x="978.8" y="51.8" width="1.8" height="1.3" fill="#0a0a0a"/>
<rect x="981.8" y="51.8" width="1.8" height="1.3" fill="#0a0a0a"/>
<path d="M992.5,49.5 L1002,42 L1011.5,49.5 Z" fill="#2c2222" stroke="#857438" stroke-width="1" stroke-dasharray="1.2,0.8"/>
<rect x="994" y="50" width="18" height="6" fill="#5a5e5e"/>
<rect x="996" y="53.8" width="1.8" height="1.3" fill="#0a0a0a"/>
<rect x="999" y="53.8" width="1.8" height="1.3" fill="#0a0a0a"/>
<rect x="1002" y="53.8" width="1.8" height="1.3" fill="#0a0a0a"/>
<rect x="1005" y="53.8" width="1.8" height="1.3" fill="#0a0a0a"/>
<rect x="1008" y="53.8" width="1.8" height="1.3" fill="#0a0a0a"/>
</svg>
<div class="abs" style="left:511px;top:72px;width:505px;height:614px;background:#000"></div>
<div class="abs" style="left:511px;top:72px;width:505px;height:14px;background:#212121"></div>

<div class="abs" style="left:533px;top:73px;width:1px;height:12px;background:#f4f4f4"></div><div class="abs" style="left:534px;top:73px;width:1px;height:12px;background:#808080"></div>
<div class="abs" style="left:565px;top:73px;width:1px;height:12px;background:#f4f4f4"></div><div class="abs" style="left:566px;top:73px;width:1px;height:12px;background:#808080"></div>
<div class="abs" style="left:745px;top:73px;width:1px;height:12px;background:#f4f4f4"></div><div class="abs" style="left:746px;top:73px;width:1px;height:12px;background:#808080"></div>
<div class="abs" style="left:845px;top:73px;width:1px;height:12px;background:#f4f4f4"></div><div class="abs" style="left:846px;top:73px;width:1px;height:12px;background:#808080"></div>
<div class="abs" style="left:945px;top:73px;width:1px;height:12px;background:#f4f4f4"></div><div class="abs" style="left:946px;top:73px;width:1px;height:12px;background:#808080"></div>
<div class="abs" style="left:975px;top:73px;width:1px;height:12px;background:#f4f4f4"></div><div class="abs" style="left:976px;top:73px;width:1px;height:12px;background:#808080"></div>
<div class="abs" style="left:1014px;top:73px;width:1px;height:12px;background:#f4f4f4"></div><div class="abs" style="left:1015px;top:73px;width:1px;height:12px;background:#808080"></div>
<div class="abs" style="left:572px;top:72px;height:14px;line-height:14px;font-size:9.35px;color:#d8d8d8">Destination</div>
<div class="abs" style="left:752px;top:72px;height:14px;line-height:14px;font-size:9.35px;color:#d8d8d8">Arrival Time</div>
<div class="abs" style="left:852px;top:72px;height:14px;line-height:14px;font-size:9.35px;color:#d8d8d8">Departure time</div>
<svg class="abs" style="left:541px;top:90px" width="19" height="21" viewBox="0 0 18 20">
<path d="M2.5,8 L14,8 Q14.8,13 13.5,16.5 Q12,19.8 8,19.8 Q3.5,19.5 2.8,15 Z" fill="#eab9a2"/>
<path d="M11.5,9 Q13.5,13 12,18 Q13.8,16 14,12 L14,8.5 Z" fill="#b07a66"/>
<path d="M14,8 L15,11 L14.2,14 Z" fill="#5a4030"/>
<path d="M0.5,6.5 Q0.5,2 7,0.8 Q14,0 17,4 Q17.5,7 14.5,8.8 Q9,10.5 2.5,9.5 Q0.5,8.5 0.5,6.5 Z" fill="#3a3b3b"/>
<path d="M2,5 Q5,1.5 10,1.5 Q13,1.8 15,3.5 Q10,3 5,5.5 Z" fill="#5c5e5e"/>
<path d="M2.5,8.5 Q9,10 14.5,8 L14.5,9.2 Q9,11 2.5,10 Z" fill="#1e1e1e"/>
</svg>
<div class="abs" style="left:572px;top:94px;height:14px;line-height:14px;font-size:11px;color:#f0f0f0">Service1</div>
<div class="abs" style="left:752px;top:94px;height:14px;line-height:14px;font-size:11px;color:#f0f0f0">--:--:--</div>
<div class="abs" style="left:852px;top:94px;height:14px;line-height:14px;font-size:11px;color:#f0f0f0">12:00:00</div>
<div class="abs" style="left:700px;top:686px;width:58px;height:12px;background:rgba(255,255,255,0.07)"></div>
<div class="abs" style="left:511px;top:698px;width:505px;height:80px;background:linear-gradient(90deg,#2f3030 0%,#323333 40%,#383939 62%,#333434 75%,#3a3b3b 100%);overflow:hidden">
<div class="abs" style="left:189px;top:0;width:58px;height:80px;background:rgba(255,255,255,0.025)"></div>
<div class="abs" style="left:405px;top:-15px;width:100px;height:100px;border-radius:50%;border:5px solid rgba(255,255,255,0.025);background:radial-gradient(circle at 50% 50%,rgba(255,255,255,0.05),rgba(255,255,255,0.015) 70%)"></div>
<div class="abs" style="left:450px;top:0;width:22px;height:80px;background:rgba(255,255,255,0.03)"></div>
</div>
<svg class="abs" style="left:900px;top:680px" width="126" height="18" viewBox="900 680 126 18"><circle cx="966" cy="732" r="50" fill="none" stroke="rgba(255,255,255,0.10)" stroke-width="5"/><path d="M930,698 L966,686 L1002,698" stroke="rgba(255,255,255,0.08)" stroke-width="4" fill="none"/></svg>
<div class="abs" style="left:878px;top:709px;width:124px;height:1px;background:#d8d8d8"></div>
<div class="abs" style="left:878px;top:766px;width:124px;height:1px;background:#d8d8d8"></div>
<div class="abs" style="left:878px;top:726px;width:124px;height:24px;line-height:24px;font-size:19.5px;color:#fff;text-align:center">Ok</div>

</body></html>
